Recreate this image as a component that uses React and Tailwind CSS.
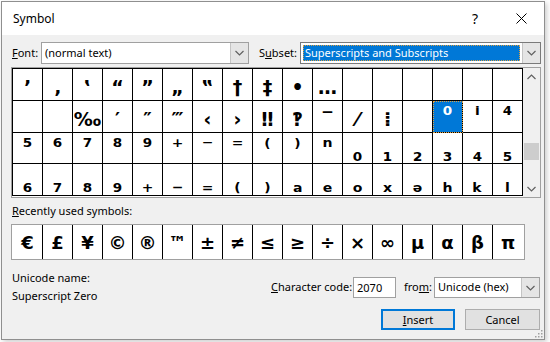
import React from 'react';

// symbol grid, 17 columns x 4 rows
const GRID = [
  ['’', '‚', '‛', '“', '”', '„', '‟', '†', '‡', '•', '…', '', '', '', '', '', ''],
  ['', '', '‰', '′', '″', '‴', '‹', '›', '‼', '‽', '‾', '⁄', '⁞', '', '⁰', 'ⁱ', '⁴'],
  ['⁵', '⁶', '⁷', '⁸', '⁹', '⁺', '⁻', '⁼', '⁽', '⁾', 'ⁿ', '₀', '₁', '₂', '₃', '₄', '₅'],
  ['₆', '₇', '₈', '₉', '₊', '₋', '₌', '₍', '₎', 'ₐ', 'ₑ', 'ₒ', 'ₓ', 'ₔ', 'ₕ', 'ₖ', 'ₗ'],
];
const ROW_H = ['h-[32px]', 'h-[32px]', 'h-[31px]', 'h-[32px]'];

const RECENT = ['€', '£', '¥', '©', '®', '™', '±', '≠', '≤', '≥', '÷', '×', '∞', 'µ', 'α', 'β', 'π'];

const SUP = '⁰ⁱ⁴⁵⁶⁷⁸⁹⁺⁻⁼⁽⁾ⁿ';
const SUB = '₀₁₂₃₄₅₆₇₈₉₊₋₌₍₎ₐₑₒₓₔₕₖₗ';

const glyphClass = (ch) => {
  if (ch && SUP.includes(ch)) return 'text-[22px] leading-[26px] pt-[1px] font-bold';
  if (ch && SUB.includes(ch)) return 'text-[22px] leading-[22px] pt-[10px] font-bold';
  return 'text-[19px] leading-[26px] pt-[5px] font-bold';
};

const Chevron = ({ up = false }) => (
  <svg width="9" height="6" viewBox="0 0 9 6" className="block">
    <path
      d={up ? 'M0.5 5 L4.5 1 L8.5 5' : 'M0.5 1 L4.5 5 L8.5 1'}
      fill="none"
      stroke="#606060"
      strokeWidth="1.2"
    />
  </svg>
);

const DropButton = ({ className = '' }) => (
  <div className={`w-[18px] h-full flex items-center justify-center bg-[#e5e5e5] border-l border-[#c4c4c4] ${className}`}>
    <Chevron />
  </div>
);

function TitleBar() {
  return (
    <div className="h-[33px] bg-white flex items-center shrink-0">
      <span className="pl-[11px] text-[12px] text-black">Symbol</span>
      <div className="ml-auto flex h-full">
        <div className="w-[46px] h-full flex items-center justify-center text-[14px] text-black">?</div>
        <div className="w-[46px] h-full flex items-center justify-center">
          <svg width="11" height="11" viewBox="0 0 11 11">
            <path d="M0.5 0.5 L10.5 10.5 M10.5 0.5 L0.5 10.5" stroke="#000" strokeWidth="1" />
          </svg>
        </div>
      </div>
    </div>
  );
}

function SymbolGrid() {
  return (
    <div className="mt-[3px] w-[530px] h-[131px] border border-[#a0a0a0] bg-white flex">
      <div className="h-[128px] border-l border-t border-black flex flex-col font-['DejaVu_Sans',sans-serif]">
        {GRID.map((row, r) => (
          <div key={r} className="flex">
            {row.map((ch, c) => {
              const selected = r === 1 && c === 14;
              return (
                <div
                  key={c}
                  className={`w-[30px] ${ROW_H[r]} border-r border-b border-black flex justify-center whitespace-nowrap ${
                    selected
                      ? 'bg-[#0078d7] text-white outline-1 outline-dotted outline-[#e0a040] -outline-offset-1'
                      : 'text-black'
                  }`}
                >
                  <span className={glyphClass(ch)}>{ch}</span>
                </div>
              );
            })}
          </div>
        ))}
      </div>
      <div className="w-[17px] h-[129px] bg-[#f0f0f0] flex flex-col items-center">
        <div className="h-[17px] w-full flex items-center justify-center">
          <Chevron up />
        </div>
        <div className="mt-[58px] w-[15px] h-[17px] bg-[#cdcdcd]" />
        <div className="mt-auto h-[17px] w-full flex items-center justify-center">
          <Chevron />
        </div>
      </div>
    </div>
  );
}

function RecentRow() {
  return (
    <div className="mt-[5px] w-[514px] h-[36px] border border-[#a0a0a0] bg-white flex pl-px font-['DejaVu_Sans',sans-serif]">
      {RECENT.map((ch, i) => (
        <div
          key={i}
          className={`w-[30px] h-full flex items-center justify-center text-[18px] font-bold text-black ${
            i < RECENT.length - 1 ? 'border-r border-black' : ''
          }`}
        >
          {ch}
        </div>
      ))}
    </div>
  );
}

export default function App() {
  return (
    <div className="w-[550px] h-[342px] bg-white overflow-hidden font-['Noto_Sans',sans-serif] text-[11px] text-black">
      <div className="relative ml-px mt-px w-[544px] h-[339px] border border-[#8f8f8f] bg-[#f0f0f0] flex flex-col shadow-[2px_2px_5px_rgba(0,0,0,0.2)]">
        <TitleBar />
        <div className="flex-1 pl-[9px] pr-[3px] whitespace-nowrap">
          {/* font / subset */}
          <div className="mt-[7px] h-[22px] flex items-center">
            <span className="w-[30px] pl-px">
              <u>F</u>ont:
            </span>
            <div className="w-[208px] h-full border border-[#a0a0a0] bg-white flex items-center">
              <span className="flex-1 pl-[3px]">(normal text)</span>
              <DropButton />
            </div>
            <span className="ml-[10px] w-[41px]">
              S<u>u</u>bset:
            </span>
            <div className="w-[241px] h-full border border-[#7a7a7a] bg-white flex items-center">
              <div className="flex-1 h-[16px] mx-[2px] bg-[#0078d7] text-white pl-[2px] leading-[16px] outline-1 outline-dotted outline-[#e0a040] -outline-offset-1">
                Superscripts and Subscripts
              </div>
              <DropButton className="border-[#a0a0a0]" />
            </div>
          </div>

          <SymbolGrid />

          <div className="mt-[5px] h-[16px] leading-[16px] pl-px">
            <u>R</u>ecently used symbols:
          </div>
          <RecentRow />

          {/* bottom */}
          <div className="flex">
            <div className="pt-[9px] pl-px leading-[18px]">
              <div>Unicode name:</div>
              <div>Superscript Zero</div>
            </div>
            <div className="ml-auto mr-px pt-[17px] w-[269px]">
              <div className="h-[21px] flex items-center">
                <span className="w-[82px]">
                  <u>C</u>haracter code:
                </span>
                <div className="w-[43px] h-full border border-[#a0a0a0] bg-white pl-[3px] leading-[19px]">2070</div>
                <span className="ml-[8px] w-[30px]">
                  fro<u>m</u>:
                </span>
                <div className="w-[106px] h-full border border-[#a0a0a0] bg-white flex items-center">
                  <span className="flex-1 pl-[3px]">Unicode (hex)</span>
                  <DropButton />
                </div>
              </div>
              <div className="mt-[11px] flex justify-end gap-[10px]">
                <button className="w-[74px] h-[21px] bg-[#e1e1e1] border-2 border-[#0078d7] text-[11px] leading-[17px]">
                  <u>I</u>nsert
                </button>
                <button className="w-[75px] h-[21px] bg-[#e1e1e1] border border-[#adadad] text-[11px] leading-[19px]">
                  Cancel
                </button>
              </div>
            </div>
          </div>
        </div>
        {/* resize grip */}
        <svg className="absolute right-[1px] bottom-[1px]" width="10" height="10" viewBox="0 0 10 10">
          {[[8, 2], [8, 5], [5, 5], [8, 8], [5, 8], [2, 8]].map(([x, y], i) => (
            <rect key={i} x={x} y={y} width="1.5" height="1.5" fill="#a0a0a0" />
          ))}
        </svg>
      </div>
    </div>
  );
}
